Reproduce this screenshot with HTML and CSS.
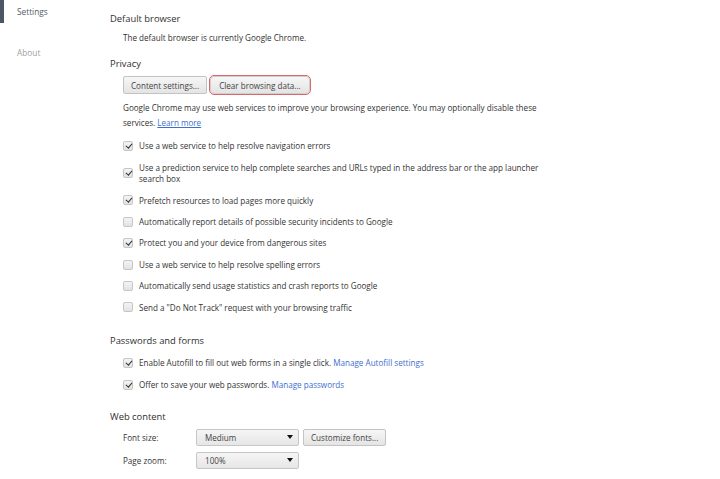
FILE: index.html
```html
<!DOCTYPE html>
<html lang="en">
<head>
    <meta charset="UTF-8">
    <title>Settings</title>
    <link rel="stylesheet" href="styles.css">
</head>
<body>

<div class="page">

    <!-- left navigation -->
    <nav class="sidebar">
        <a class="nav-item selected">Settings</a>
        <a class="nav-item">About</a>
    </nav>

    <main class="content">

        <section class="section">
            <h2 class="section-title">Default browser</h2>
            <div class="section-body">
                <p class="text">The default browser is currently Google Chrome.</p>
            </div>
        </section>

        <section class="section">
            <h2 class="section-title">Privacy</h2>
            <div class="section-body">
                <div class="button-row">
                    <button class="btn">Content settings...</button>
                    <button class="btn focused">Clear browsing data...</button>
                </div>
                <p class="text note">Google Chrome may use web services to improve your browsing experience. You may optionally disable these services. <a class="link underline">Learn more</a></p>

                <div class="check-list">
                    <label class="check-row"><span class="box checked"></span><span>Use a web service to help resolve navigation errors</span></label>
                    <label class="check-row"><span class="box checked"></span><span>Use a prediction service to help complete searches and URLs typed in the address bar or the app launcher search box</span></label>
                    <label class="check-row"><span class="box checked"></span><span>Prefetch resources to load pages more quickly</span></label>
                    <label class="check-row"><span class="box"></span><span>Automatically report details of possible security incidents to Google</span></label>
                    <label class="check-row"><span class="box checked"></span><span>Protect you and your device from dangerous sites</span></label>
                    <label class="check-row"><span class="box"></span><span>Use a web service to help resolve spelling errors</span></label>
                    <label class="check-row"><span class="box"></span><span>Automatically send usage statistics and crash reports to Google</span></label>
                    <label class="check-row"><span class="box"></span><span>Send a "Do Not Track" request with your browsing traffic</span></label>
                </div>
            </div>
        </section>

        <section class="section passwords">
            <h2 class="section-title">Passwords and forms</h2>
            <div class="section-body">
                <div class="check-list">
                    <label class="check-row"><span class="box checked"></span><span>Enable Autofill to fill out web forms in a single click. <a class="link">Manage Autofill settings</a></span></label>
                    <label class="check-row"><span class="box checked"></span><span>Offer to save your web passwords. <a class="link">Manage passwords</a></span></label>
                </div>
            </div>
        </section>

        <section class="section web-content">
            <h2 class="section-title">Web content</h2>
            <div class="section-body">
                <div class="field-row">
                    <span class="field-label">Font size:</span>
                    <div class="select"><span>Medium</span><span class="arrow"></span></div>
                    <button class="btn">Customize fonts...</button>
                </div>
                <div class="field-row">
                    <span class="field-label">Page zoom:</span>
                    <div class="select"><span>100%</span><span class="arrow"></span></div>
                </div>
            </div>
        </section>

    </main>
</div>

</body>
</html>
```

FILE: styles.css
```css
body {
    margin: 0;
    background-color: #fff;
    font-family: "Open Sans", "Noto Sans", sans-serif;
    font-size: 8.1px;
    color: #333;
}

.page {
    display: flex;
}

/* navigation */
.sidebar {
    width: 110px;
    flex-shrink: 0;
    display: flex;
    flex-direction: column;
    gap: 18px;
}

.nav-item {
    display: block;
    height: 23px;
    line-height: 24px;
    padding-left: 17px;
    font-size: 8.3px;
    color: #a0a0a0;
}

.nav-item.selected {
    padding-left: 13px;
    border-left: 4px solid #4d5665;
    color: #555b66;
}

/* sections */
.content {
    flex: 1;
    padding-top: 10px;
}

.section + .section {
    margin-top: 9px;
}

.section.passwords {
    margin-top: 13.5px;
}

.section.web-content {
    margin-top: 12.5px;
}

.section-title {
    margin: 0 0 2px;
    font-size: 9.4px;
    font-weight: normal;
    line-height: 18px;
    color: #303030;
}

.section-body {
    padding-left: 13px;
    width: 425px;
}

.text {
    margin: 0;
    line-height: 16px;
}

.note {
    margin-top: 6px;
    line-height: 15px;
}

.link {
    color: #3d6fd0;
    cursor: pointer;
}

.underline {
    text-decoration: underline;
}

/* buttons */
.button-row {
    display: flex;
    gap: 3px;
    padding-top: 1px;
}

.btn {
    height: 18px;
    padding: 0 7px;
    font-family: inherit;
    font-size: 8.1px;
    color: #444;
    background: linear-gradient(#f6f6f6, #e4e4e4);
    border: 1px solid #c3c3c3;
    border-radius: 2px;
}

.btn.focused {
    padding: 0 8px;
    outline: 1px solid #d8686b;
    outline-offset: 0;
    border-color: #cfcfcf;
    border-radius: 4px;
}

/* checkboxes */
.check-list {
    margin-top: 5.5px;
}

.passwords .check-list {
    margin-top: 3px;
}

.check-row {
    display: flex;
    align-items: center;
    gap: 6px;
    padding: 4.95px 0;
    line-height: 11.5px;
}

.box {
    flex-shrink: 0;
    width: 10px;
    height: 10px;
    box-sizing: border-box;
    border: 1px solid #c6c6c6;
    border-radius: 2px;
    background: linear-gradient(#f4f4f4, #e2e2e2);
    position: relative;
}

.box.checked::after {
    content: "";
    position: absolute;
    left: 2.5px;
    top: 0px;
    width: 2.5px;
    height: 5px;
    border-right: 1.6px solid #333;
    border-bottom: 1.6px solid #333;
    transform: rotate(40deg);
}

/* web content fields */
.field-row {
    display: flex;
    align-items: center;
    height: 17px;
    margin-top: 3px;
}

.field-row + .field-row {
    margin-top: 6px;
}

.field-label {
    width: 73px;
}

.select {
    width: 103px;
    height: 17px;
    box-sizing: border-box;
    display: flex;
    align-items: center;
    justify-content: space-between;
    padding: 0 5px 0 8px;
    background: linear-gradient(#f5f5f5, #e6e6e6);
    border: 1px solid #c6c6c6;
    border-radius: 2px;
    color: #444;
}

.arrow {
    width: 0;
    height: 0;
    border-left: 3.5px solid transparent;
    border-right: 3.5px solid transparent;
    border-top: 4px solid #111;
}

.field-row .btn {
    margin-left: 4px;
    height: 17px;
}
```
